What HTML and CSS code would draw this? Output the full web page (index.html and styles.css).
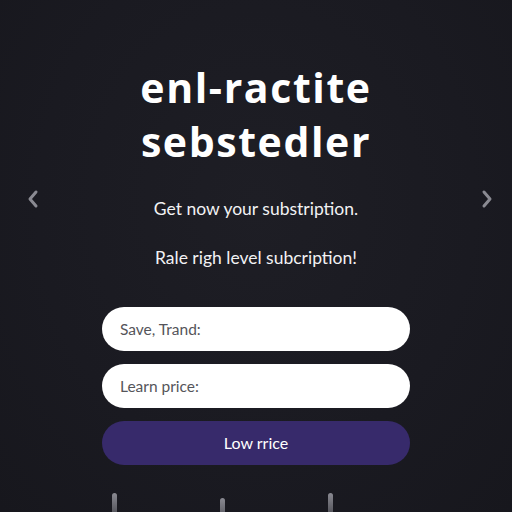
FILE: index.html
```html
<!DOCTYPE html>
<html lang="en">
<head>
  <meta charset="UTF-8">
  <meta name="viewport" content="width=device-width, initial-scale=1.0">
  <title>Subscription</title>
  <link rel="stylesheet" href="styles.css">
</head>
<body>

<div class="screen">
  <button class="nav nav-prev" aria-label="Previous">
    <svg width="14" height="20" viewBox="0 0 14 20"><path d="M10 3 L4 10 L10 17" fill="none" stroke="#8a8a92" stroke-width="3" stroke-linecap="round" stroke-linejoin="round"/></svg>
  </button>
  <button class="nav nav-next" aria-label="Next">
    <svg width="14" height="20" viewBox="0 0 14 20"><path d="M4 3 L10 10 L4 17" fill="none" stroke="#8a8a92" stroke-width="3" stroke-linecap="round" stroke-linejoin="round"/></svg>
  </button>

  <h1 class="title">enl-ractite<br>sebstedler</h1>

  <p class="lead">Get now your substription.</p>
  <p class="lead lead-second">Rale righ level subcription!</p>

  <form class="form">
    <div class="field">Save, Trand:</div>
    <div class="field">Learn price:</div>
    <button type="button" class="submit">Low rrice</button>
  </form>

  <div class="ticks">
    <span class="tick"></span>
    <span class="tick tick-short"></span>
    <span class="tick"></span>
  </div>
</div>

</body>
</html>
```

FILE: styles.css
```css
body {
  margin: 0;
  background: #1b1b22;
  font-family: "Lato", "Open Sans", sans-serif;
}
.screen {
  position: relative;
  height: 512px;
  overflow: hidden;
  display: flex;
  flex-direction: column;
  align-items: center;
  background: radial-gradient(ellipse at 50% 40%, #1e1e25 0%, #1a1a21 60%, #17171d 100%);
}
.nav {
  position: absolute;
  top: 189px;
  background: none;
  border: 0;
  padding: 0;
}
.nav-prev {
  left: 26px;
}
.nav-next {
  right: 18px;
}
.title {
  margin: 60px 0 0;
  color: #ffffff;
  font-family: "Open Sans", sans-serif;
  font-size: 41px;
  font-weight: 700;
  line-height: 54px;
  text-align: center;
  letter-spacing: 1.6px;
}
.lead {
  margin: 30px 0 0;
  color: #f2f2f4;
  font-size: 17.5px;
  text-align: center;
}
.lead-second {
  margin-top: 28px;
}
.form {
  margin-top: 39px;
  width: 308px;
  display: flex;
  flex-direction: column;
  gap: 13px;
}
.field {
  height: 44px;
  border-radius: 22px;
  background: #ffffff;
  color: #55555a;
  font-size: 15.5px;
  line-height: 44px;
  padding-left: 18px;
}
.submit {
  height: 44px;
  border: 0;
  border-radius: 22px;
  background: #372a6b;
  color: #ffffff;
  font-family: inherit;
  font-size: 16px;
  padding-bottom: 3px;
}
.ticks {
  margin-top: 28px;
  align-self: flex-start;
  margin-left: 112px;
  display: flex;
  gap: 103px;
  align-items: flex-start;
}
.tick {
  width: 5px;
  height: 20px;
  border-radius: 3px 3px 0 0;
  background: linear-gradient(#8a8a92, #55555c);
}
.tick-short {
  margin-top: 5px;
}
```
